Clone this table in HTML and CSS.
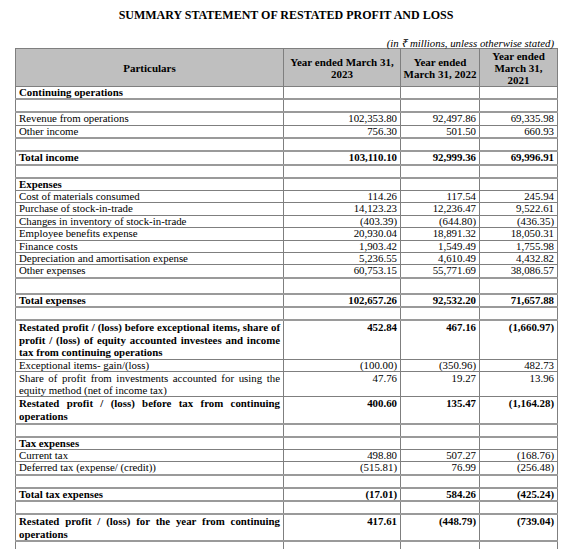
FILE: index.html
```html
<!DOCTYPE html>
<html lang="en">
<head>
    <meta charset="UTF-8">
    <title>Summary Statement of Restated Profit and Loss</title>
    <link rel="stylesheet" href="styles.css">
</head>
<body>

<div class="page">
    <h2 class="title">SUMMARY STATEMENT OF RESTATED PROFIT AND LOSS</h2>
    <p class="unit">(in &#8377; millions, unless otherwise stated)</p>

    <table class="statement">
        <colgroup>
            <col class="col-part">
            <col class="col-2023">
            <col class="col-2022">
            <col class="col-2021">
        </colgroup>
        <thead>
            <tr>
                <th>Particulars</th>
                <th>Year ended March 31,<br>2023</th>
                <th>Year ended<br>March 31, 2022</th>
                <th>Year ended<br>March 31,<br>2021</th>
            </tr>
        </thead>
        <tbody>
            <tr class="bold">
                <td>Continuing operations</td><td></td><td></td><td></td>
            </tr>
            <tr class="gap"><td></td><td></td><td></td><td></td></tr>
            <tr>
                <td>Revenue from operations</td><td>102,353.80</td><td>92,497.86</td><td>69,335.98</td>
            </tr>
            <tr>
                <td>Other income</td><td>756.30</td><td>501.50</td><td>660.93</td>
            </tr>
            <tr class="gap"><td></td><td></td><td></td><td></td></tr>
            <tr class="bold">
                <td>Total income</td><td>103,110.10</td><td>92,999.36</td><td>69,996.91</td>
            </tr>
            <tr class="gap"><td></td><td></td><td></td><td></td></tr>
            <tr class="bold">
                <td>Expenses</td><td></td><td></td><td></td>
            </tr>
            <tr>
                <td>Cost of materials consumed</td><td>114.26</td><td>117.54</td><td>245.94</td>
            </tr>
            <tr>
                <td>Purchase of stock-in-trade</td><td>14,123.23</td><td>12,236.47</td><td>9,522.61</td>
            </tr>
            <tr>
                <td>Changes in inventory of stock-in-trade</td><td>(403.39)</td><td>(644.80)</td><td>(436.35)</td>
            </tr>
            <tr>
                <td>Employee benefits expense</td><td>20,930.04</td><td>18,891.32</td><td>18,050.31</td>
            </tr>
            <tr>
                <td>Finance costs</td><td>1,903.42</td><td>1,549.49</td><td>1,755.98</td>
            </tr>
            <tr>
                <td>Depreciation and amortisation expense</td><td>5,236.55</td><td>4,610.49</td><td>4,432.82</td>
            </tr>
            <tr>
                <td>Other expenses</td><td>60,753.15</td><td>55,771.69</td><td>38,086.57</td>
            </tr>
            <tr class="gap tall"><td></td><td></td><td></td><td></td></tr>
            <tr class="bold">
                <td>Total expenses</td><td>102,657.26</td><td>92,532.20</td><td>71,657.88</td>
            </tr>
            <tr class="gap"><td></td><td></td><td></td><td></td></tr>
            <tr class="bold multi">
                <td>Restated profit / (loss) before exceptional items, share of profit / (loss) of equity accounted investees and income tax from continuing operations</td>
                <td>452.84</td><td>467.16</td><td>(1,660.97)</td>
            </tr>
            <tr>
                <td>Exceptional items- gain/(loss)</td><td>(100.00)</td><td>(350.96)</td><td>482.73</td>
            </tr>
            <tr class="multi snug">
                <td>Share of profit from investments accounted for using the equity method (net of income tax)</td>
                <td>47.76</td><td>19.27</td><td>13.96</td>
            </tr>
            <tr class="bold multi">
                <td>Restated profit / (loss) before tax from continuing operations</td>
                <td>400.60</td><td>135.47</td><td>(1,164.28)</td>
            </tr>
            <tr class="gap"><td></td><td></td><td></td><td></td></tr>
            <tr class="bold">
                <td>Tax expenses</td><td></td><td></td><td></td>
            </tr>
            <tr>
                <td>Current tax</td><td>498.80</td><td>507.27</td><td>(168.76)</td>
            </tr>
            <tr>
                <td>Deferred tax (expense/ (credit))</td><td>(515.81)</td><td>76.99</td><td>(256.48)</td>
            </tr>
            <tr class="gap"><td></td><td></td><td></td><td></td></tr>
            <tr class="bold">
                <td>Total tax expenses</td><td>(17.01)</td><td>584.26</td><td>(425.24)</td>
            </tr>
            <tr class="gap"><td></td><td></td><td></td><td></td></tr>
            <tr class="bold multi">
                <td>Restated profit / (loss) for the year from continuing operations</td>
                <td>417.61</td><td>(448.79)</td><td>(739.04)</td>
            </tr>
            <tr class="gap"><td></td><td></td><td></td><td></td></tr>
        </tbody>
    </table>
</div>

</body>
</html>
```

FILE: styles.css
```css
body {
    margin: 0;
    font-family: "Liberation Serif", "Times New Roman", serif;
    color: #000;
    background-color: #fff;
}
.page {
    width: 542px;
    margin-left: 15px;
    padding-top: 8px;
}
.title {
    margin: 0;
    font-size: 12px;
    line-height: 14px;
    text-align: center;
}
.unit {
    margin: 16px 0 0;
    padding-right: 3px;
    font-size: 10.8px;
    font-style: italic;
    line-height: 10px;
    text-align: right;
}
table.statement {
    width: 542px;
    border-collapse: collapse;
    table-layout: fixed;
    font-size: 10.85px;
}
.col-part { width: 268px; }
.col-2023 { width: 117px; }
.col-2022 { width: 79px; }
.col-2021 { width: 78px; }
th, td {
    border: 1px solid #7f7f7f;
    padding: 0 3px 0 4px;
    line-height: 11.4px;
}
th {
    height: 37px;
    background-color: #bfbfbf;
    text-align: center;
    vertical-align: middle;
    font-weight: bold;
    font-size: 11px;
    line-height: 12px;
    padding: 0 2px;
}
td {
    vertical-align: top;
    text-align: right;
}
td:first-child {
    text-align: justify;
    padding-left: 3px;
}
.bold td {
    font-weight: bold;
}
.multi td {
    line-height: 12.6px;
}
.multi.snug td {
    line-height: 12px;
}
.gap td {
    height: 11px;
    border-top: 2px solid #9a9a9a;
    border-bottom: 2px solid #9a9a9a;
}
.gap.tall td {
    height: 14px;
}
```
